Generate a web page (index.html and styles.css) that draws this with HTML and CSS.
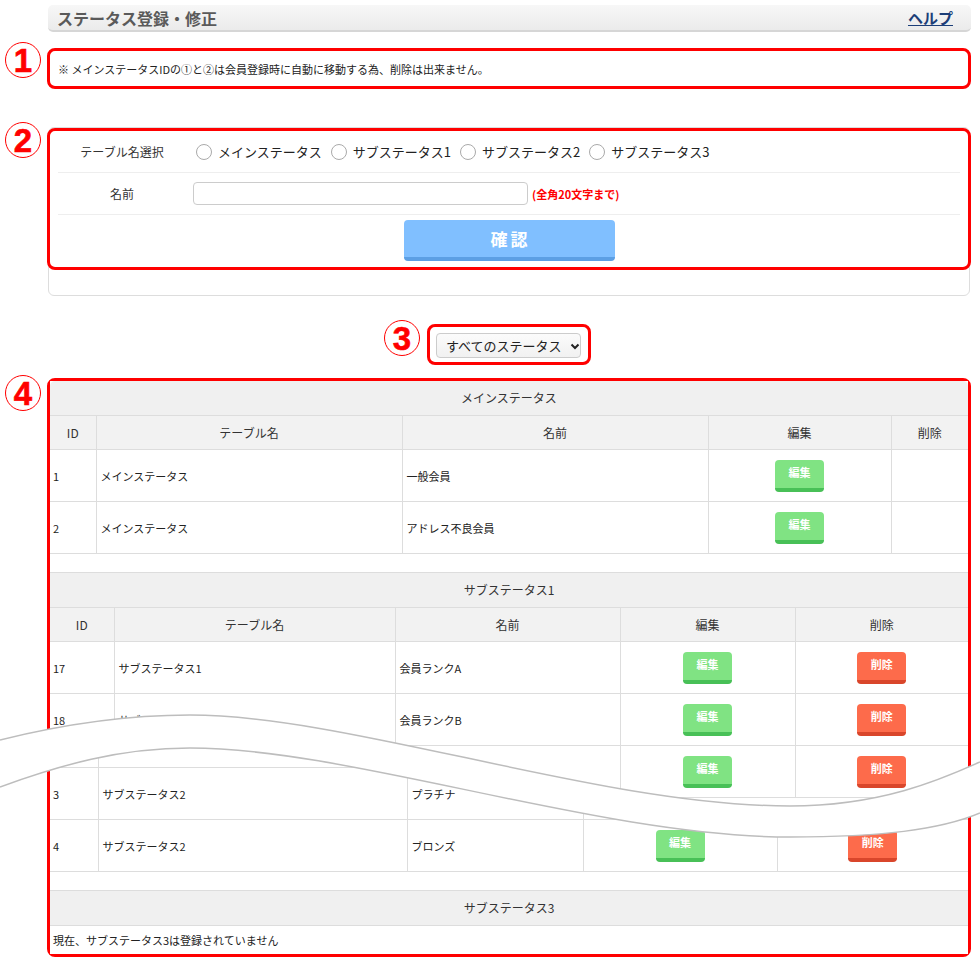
FILE: index.html
```html
<!DOCTYPE html>
<html lang="ja">
<head>
<meta charset="UTF-8">
<title>ステータス登録・修正</title>
<link rel="stylesheet" href="styles.css">
</head>
<body>
<div class="sheet">
	<div class="main">
		<div class="titlebar">
			<h1>ステータス登録・修正</h1>
			<a class="help" href="#">ヘルプ</a>
		</div>

		<div class="note mark">
			<span class="num">1</span>
			※ メインステータスIDの①と②は会員登録時に自動に移動する為、削除は出来ません。
		</div>

		<div class="panel">
			<div class="formbox mark">
				<span class="num">2</span>
				<div class="frow">
					<div class="flabel">テーブル名選択</div>
					<div class="fvalue">
						<label class="ropt"><input type="radio" name="tbl">メインステータス</label>
						<label class="ropt"><input type="radio" name="tbl">サブステータス1</label>
						<label class="ropt"><input type="radio" name="tbl">サブステータス2</label>
						<label class="ropt"><input type="radio" name="tbl">サブステータス3</label>
					</div>
				</div>
				<div class="frow">
					<div class="flabel">名前</div>
					<div class="fvalue">
						<input type="text" class="name">
						<span class="limit">(全角20文字まで)</span>
					</div>
				</div>
				<div class="fbtn">
					<button class="confirm">確認</button>
				</div>
			</div>
		</div>

		<div class="filter">
			<div class="selbox mark">
				<span class="num">3</span>
				<select class="sel">
					<option>すべてのステータス</option>
					<option>メインステータス</option>
					<option>サブステータス1</option>
					<option>サブステータス2</option>
					<option>サブステータス3</option>
				</select>
				<svg class="chev" width="10" height="7" viewBox="0 0 10 7"><path d="M1.5 1.5 L5 5 L8.5 1.5" fill="none" stroke="#222" stroke-width="2"/></svg>
			</div>
		</div>

		<div class="list mark">
			<span class="num">4</span>

			<div class="group">
				<div class="cap first">メインステータス</div>
				<table class="tbl t1">
					<colgroup><col><col><col><col><col></colgroup>
					<thead>
						<tr><th>ID</th><th>テーブル名</th><th>名前</th><th>編集</th><th>削除</th></tr>
					</thead>
					<tbody>
						<tr><td>1</td><td>メインステータス</td><td>一般会員</td><td class="act"><button class="btn edit">編集</button></td><td></td></tr>
						<tr><td>2</td><td>メインステータス</td><td>アドレス不良会員</td><td class="act"><button class="btn edit">編集</button></td><td></td></tr>
					</tbody>
				</table>
			</div>

			<div class="group">
				<div class="cap">サブステータス1</div>
				<table class="tbl t2">
					<colgroup><col><col><col><col><col></colgroup>
					<thead>
						<tr><th>ID</th><th>テーブル名</th><th>名前</th><th>編集</th><th>削除</th></tr>
					</thead>
					<tbody>
						<tr><td>17</td><td>サブステータス1</td><td>会員ランクA</td><td class="act"><button class="btn edit">編集</button></td><td class="act"><button class="btn del">削除</button></td></tr>
						<tr><td>18</td><td>サブステータス1</td><td>会員ランクB</td><td class="act"><button class="btn edit">編集</button></td><td class="act"><button class="btn del">削除</button></td></tr>
						<tr><td>19</td><td>サブステータス1</td><td>会員ランクC</td><td class="act"><button class="btn edit">編集</button></td><td class="act"><button class="btn del">削除</button></td></tr>
					</tbody>
				</table>
			</div>

			<!-- rows of サブステータス2 below the page break -->
			<div class="group cut">
				<table class="tbl t3">
					<colgroup><col><col><col><col><col></colgroup>
					<tbody>
						<tr><td></td><td></td><td></td><td></td><td></td></tr>
						<tr><td>3</td><td>サブステータス2</td><td>プラチナ</td><td class="act"><button class="btn edit">編集</button></td><td class="act"><button class="btn del">削除</button></td></tr>
						<tr><td>4</td><td>サブステータス2</td><td>ブロンズ</td><td class="act"><button class="btn edit">編集</button></td><td class="act"><button class="btn del">削除</button></td></tr>
					</tbody>
				</table>
			</div>

			<div class="group">
				<div class="cap">サブステータス3</div>
				<div class="empty">現在、サブステータス3は登録されていません</div>
			</div>
		</div>
	</div>

	<svg class="wave" width="980" height="150" viewBox="0 700 980 150">
		<path fill="#fff" d="M0,740 C60,725 120,715 190,715 C350,715 600,806 790,806 C880,806 940,780 980,762 L980,813 C940,830 880,837 790,837 C600,837 350,748 190,748 C120,748 60,765 0,787 Z"/>
		<path fill="none" stroke="#bdbdbd" stroke-width="1.5" d="M0,740 C60,725 120,715 190,715 C350,715 600,806 790,806 C880,806 940,780 980,762"/>
		<path fill="none" stroke="#bdbdbd" stroke-width="1.5" d="M0,787 C60,765 120,748 190,748 C350,748 600,837 790,837 C880,837 940,830 980,813"/>
	</svg>
</div>
</body>
</html>
```

FILE: styles.css
```css
body {
	margin: 0;
	background: #fff;
	color: #333;
	font-family: "Noto Sans CJK JP", "Noto Sans", sans-serif;
	font-size: 11px;
}
.sheet {
	position: relative;
	width: 980px;
	padding-top: 5px;
}
.main {
	margin-left: 47px;
	width: 924px;
}

/* title bar */
.titlebar {
	display: flex;
	align-items: center;
	justify-content: space-between;
	height: 25px;
	margin-left: 1px;
	padding: 0 18px 0 9px;
	background: linear-gradient(#f7f7f7, #ebebeb);
	border-bottom: 2px solid #d6d6d6;
	border-radius: 5px;
}
.titlebar h1 {
	margin: 0;
	font-size: 16px;
	font-weight: bold;
	color: #5a5a5a;
}
.help {
	font-size: 15px;
	font-weight: bold;
	color: #1c3e78;
	text-decoration: underline;
}

/* red annotation boxes */
.mark {
	position: relative;
	border: 3px solid #f00;
	border-radius: 8px;
}
.num {
	position: absolute;
	left: -45px;
	top: -9px;
	width: 34px;
	height: 34px;
	border: 1.5px solid #f00;
	border-radius: 50%;
	display: flex;
	align-items: center;
	justify-content: center;
	font: bold 33px/1 "Liberation Sans", sans-serif;
	color: #f00;
	-webkit-text-stroke: 0.6px #f00;
	background: #fff;
}

.note {
	display: flex;
	align-items: center;
	height: 35px;
	margin-top: 16px;
	padding-left: 8px;
	font-size: 11px;
	color: #222;
}

/* form */
.panel {
	margin: 38px 1px 0;
	border: 1px solid #ddd;
	border-radius: 6px;
	padding-bottom: 25px;
}
.formbox {
	margin: 0 -2px;
}
.frow {
	display: flex;
	align-items: center;
	height: 41px;
	margin: 0 8px;
	border-bottom: 1px solid #eee;
}
.flabel {
	width: 128px;
	padding-right: 7px;
	text-align: center;
	font-size: 12px;
	color: #333;
}
.fvalue {
	display: flex;
	align-items: center;
	font-size: 13px;
	color: #222;
}
.ropt {
	display: flex;
	align-items: center;
	margin-right: 9px;
}
.ropt input {
	appearance: none;
	width: 16px;
	height: 16px;
	margin: 0 6px 0 3px;
	border: 1px solid #aaa;
	border-radius: 50%;
	background: #fff;
}
.ropt + .ropt input {
	margin-left: 0;
}
.name {
	width: 335px;
	height: 23px;
	box-sizing: border-box;
	margin: 0;
	border: 1px solid #ccc;
	border-radius: 4px;
}
.limit {
	margin-left: 4px;
	font-size: 11px;
	font-weight: bold;
	color: #f00;
}
.fbtn {
	display: flex;
	justify-content: center;
	padding: 5px 0 6px;
}
.confirm {
	width: 211px;
	height: 41px;
	border: 0;
	border-bottom: 4px solid #5c9fe4;
	border-radius: 4px;
	background: #80bfff;
	color: #fff;
	font-family: inherit;
	font-size: 17px;
	font-weight: bold;
	letter-spacing: 3px;
	text-indent: 3px;
}

/* filter select */
.filter {
	display: flex;
	justify-content: center;
	margin-top: 28px;
}
.selbox {
	display: flex;
	padding: 6px 7px 4px 6px;
}
.selbox .num {
	left: -46px;
	top: -7px;
}
.sel {
	appearance: none;
	width: 145px;
	height: 25px;
	margin: 0;
	padding: 0 0 0 9px;
	border: 1px solid #ccc;
	border-radius: 4px;
	background: linear-gradient(#fbfbfb, #f1f1f1);
	color: #222;
	font-family: inherit;
	font-size: 13px;
}
.chev {
	position: absolute;
	right: 8px;
	top: 16px;
	pointer-events: none;
}

/* status tables */
.list {
	margin-top: 13px;
}
.list .num {
	top: -6px;
}
.group {
	border-bottom: 1px solid #ddd;
	background: #fff;
}
.group + .group {
	margin-top: 18px;
}
.group:last-child {
	border-bottom: 0;
}
.cap {
	height: 34px;
	line-height: 34px;
	text-align: center;
	font-size: 12px;
	background: #f0f0f0;
	border-top: 1px solid #ddd;
	border-bottom: 1px solid #ddd;
}
.cap.first {
	border-top: 0;
	border-radius: 5px 5px 0 0;
}
.group.cut {
	margin-top: -82px;
	clip-path: polygon(0 40px, 140px 10px, 430px 60px, 740px 104px, 918px 76px, 100% 100%, 0 100%);
}
.tbl {
	width: 100%;
	table-layout: fixed;
	border-collapse: collapse;
	border-style: hidden;
}
.tbl th, .tbl td {
	border: 1px solid #ddd;
	padding: 0 3px;
}
.tbl th {
	height: 33px;
	font-size: 12px;
	font-weight: normal;
	background: #f2f2f2;
}
.tbl td {
	height: 51px;
	font-size: 11px;
	color: #222;
}
.tbl td.act {
	text-align: center;
}
.tbl td:nth-child(2), .tbl td:nth-child(3) {
	padding-left: 4px;
}
.t1 col:nth-child(1) { width: 46px }
.t1 col:nth-child(2) { width: 306px }
.t1 col:nth-child(3) { width: 306px }
.t1 col:nth-child(4) { width: 183px }
.t2 col:nth-child(1) { width: 64px }
.t2 col:nth-child(2) { width: 281px }
.t2 col:nth-child(3) { width: 225px }
.t2 col:nth-child(4) { width: 175px }
.t3 col:nth-child(1) { width: 48px }
.t3 col:nth-child(2) { width: 309px }
.t3 col:nth-child(3) { width: 176px }
.t3 col:nth-child(4) { width: 194px }

.btn {
	width: 49px;
	height: 32px;
	margin: 0;
	padding: 0 0 3px;
	border: 0;
	border-bottom: 4px solid;
	border-radius: 4px;
	color: #fff;
	font-family: inherit;
	font-size: 11px;
	font-weight: bold;
	vertical-align: middle;
}
.edit {
	background: #80e383;
	border-bottom-color: #48c057;
}
.del {
	background: #fd6b4b;
	border-bottom-color: #d9462b;
}

.empty {
	height: 28px;
	line-height: 28px;
	padding-left: 3px;
	font-size: 11px;
	color: #222;
}

/* page break overlay */
.wave {
	position: absolute;
	left: 0;
	top: 700px;
	pointer-events: none;
}
```
